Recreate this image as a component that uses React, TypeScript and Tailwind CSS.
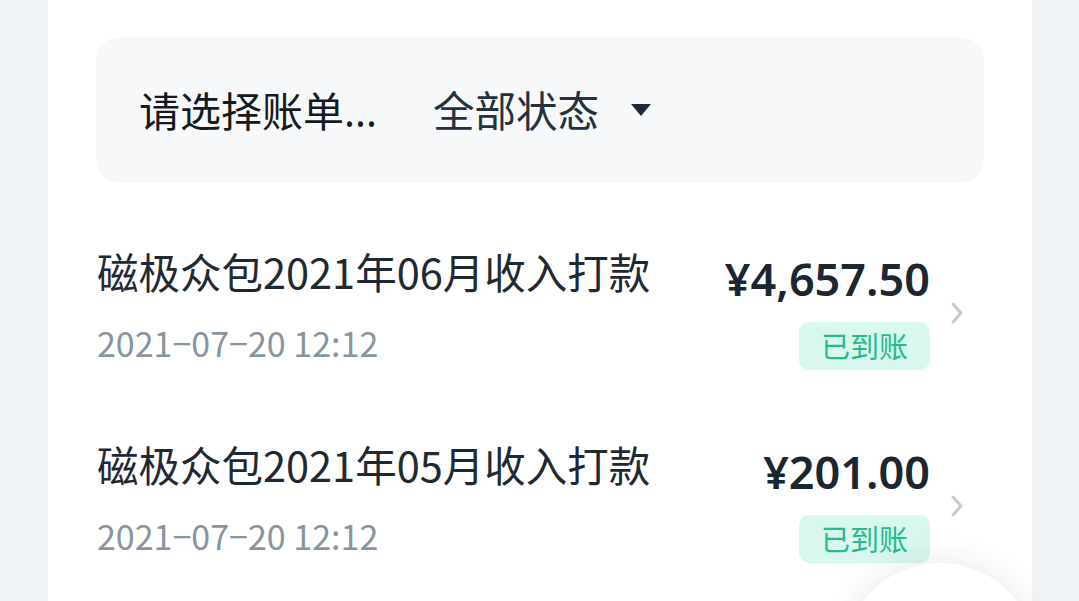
const rows = [
  { title: "磁极众包2021年06月收入打款", date: "2021−07−20 12:12", amount: "¥4,657.50" },
  { title: "磁极众包2021年05月收入打款", date: "2021−07−20 12:12", amount: "¥201.00" },
];

function Chevron() {
  return (
    <svg width="14" height="24" viewBox="0 0 14 24" fill="none">
      <path d="M3 3l8 9-8 9" stroke="#c5c9cf" strokeWidth="3" strokeLinecap="round" strokeLinejoin="round" />
    </svg>
  );
}

export default function App() {
  return (
    <div
      className="relative h-[601px] w-[1079px] overflow-hidden bg-[#f1f4f7]"
      style={{ fontFamily: '"Noto Sans CJK SC", "Noto Sans", sans-serif' }}
    >
      <div className="mx-[48px] h-full w-[984px] bg-white px-[48px] pt-[37px]">
        {/* filter bar */}
        <div className="flex h-[146px] items-center rounded-[24px] bg-[#f6f8fa] pl-[43px]">
          <span className="w-[294px] text-[41px] leading-none text-[#151a20]">
            请选择账单<span style={{ fontFamily: '"Noto Sans", sans-serif' }}>...</span>
          </span>
          <span className="text-[41.5px] leading-none text-[#243240]">全部状态</span>
          <svg className="ml-[31px]" width="22" height="14" viewBox="0 0 22 14">
            <path d="M1 1h20L11 13z" fill="#1c2836" />
          </svg>
        </div>

        {/* bill list */}
        <div className="mt-[64px]">
          {rows.map((r) => (
            <div key={r.amount} className="flex h-[193px] items-start justify-between pl-[1px] pr-[20px]">
              <div>
                <div className="text-[41.5px] leading-[48px] text-[#1f2933]">{r.title}</div>
                <div className="mt-[28px] text-[34px] leading-[40px] text-[#8795a1]">{r.date}</div>
              </div>
              <div className="flex items-center gap-[20px] pt-[8px]">
                <div className="flex flex-col items-end">
                  <div
                    className="text-[45px] font-semibold leading-[48px] text-[#1b2633]"
                    style={{ fontFamily: '"Noto Sans", sans-serif' }}
                  >
                    {r.amount}
                  </div>
                  <div className="mt-[19px] flex h-[48px] w-[131px] items-center justify-center rounded-[10px] bg-[#d8f7ee] text-[29px] text-[#27b98f]">
                    已到账
                  </div>
                </div>
                <Chevron />
              </div>
            </div>
          ))}
        </div>
      </div>

      {/* floating button */}
      <div className="absolute left-[843px] top-[563px] h-[194px] w-[194px] rounded-full bg-white shadow-[0_-6px_30px_rgba(20,40,60,0.08)]" />
    </div>
  );
}
